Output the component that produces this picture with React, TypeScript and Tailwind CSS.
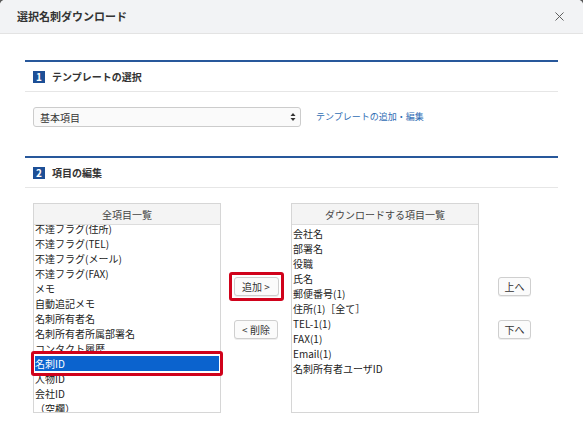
import { X } from "lucide-react";

const leftItems = [
  "不達フラグ(住所)",
  "不達フラグ(TEL)",
  "不達フラグ(メール)",
  "不達フラグ(FAX)",
  "メモ",
  "自動追記メモ",
  "名刺所有者名",
  "名刺所有者所属部署名",
  "コンタクト履歴",
  "名刺ID",
  "人物ID",
  "会社ID",
  "（空欄）",
];

const rightItems = [
  "会社名",
  "部署名",
  "役職",
  "氏名",
  "郵便番号(1)",
  "住所(1)［全て］",
  "TEL-1(1)",
  "FAX(1)",
  "Email(1)",
  "名刺所有者ユーザID",
];

function SectionHeading({ n, label }: { n: string; label: string }) {
  return (
    <div className="h-[30px] border-b border-[#e6e6e6] flex items-center gap-[7px] pl-[8px]">
      <span className="w-[12px] h-[12px] bg-[#1d4f96] text-white text-[10px] font-bold flex items-center justify-center leading-none">
        {n}
      </span>
      <span className="text-[10px] font-bold text-[#333]">{label}</span>
    </div>
  );
}

function Btn({ children, w }: { children: React.ReactNode; w: string }) {
  return (
    <div
      className={
        "h-[19px] border border-[#cfcfcf] rounded-[3px] bg-[#fbfbfb] text-[10px] text-[#333] flex items-center justify-center leading-none shadow-[0_1px_0_#eee] whitespace-nowrap " +
        w
      }
    >
      {children}
    </div>
  );
}

export default function App() {
  return (
    <div
      className="w-[583px] h-[443px] bg-[#5a5a5a] overflow-hidden"
      style={{ fontFamily: '"Noto Sans CJK JP", "Noto Sans", sans-serif' }}
    >
      <div className="h-full bg-white rounded-t-[5px] overflow-hidden">
        <div className="h-[34px] bg-[#f2f3f5] border-b border-[#e3e3e3] flex items-center justify-between pl-[17px] pr-[16px]">
          <span className="text-[11px] font-bold text-[#333]">選択名刺ダウンロード</span>
          <X size={15} strokeWidth={1.5} className="text-[#555]" />
        </div>

        <div className="px-[25px] pt-[26px]">
          <section className="border-t-2 border-[#28589b]">
            <SectionHeading n="1" label="テンプレートの選択" />
            <div className="mt-[15px] pl-[8px] flex items-center">
              <div className="w-[268px] h-[20px] border border-[#cccccc] rounded-[3px] bg-[#fafafa] flex items-center justify-between pl-[6px] pr-[4px]">
                <span className="text-[10px] text-[#333]">基本項目</span>
                <svg width="6" height="10" viewBox="0 0 6 10">
                  <path d="M3 1 L5.5 4 L0.5 4 Z" fill="#333" />
                  <path d="M3 9 L5.5 6 L0.5 6 Z" fill="#333" />
                </svg>
              </div>
              <span className="ml-[15px] text-[9px] text-[#2f6db4]">テンプレートの追加・編集</span>
            </div>
          </section>

          <section className="mt-[29px] border-t-2 border-[#28589b]">
            <SectionHeading n="2" label="項目の編集" />
            <div className="mt-[15px] pl-[8px] flex">
              {/* left list */}
              <div className="relative w-[188px] h-[210px] border border-[#d6d6d6] flex flex-col">
                <div className="h-[21px] shrink-0 bg-[#f4f4f4] border-b border-[#dddddd] flex items-center justify-center text-[10px] text-[#444]">
                  全項目一覧
                </div>
                <div className="flex-1 overflow-hidden">
                  <div className="mt-[-4px]">
                    {leftItems.map((t) => (
                      <div
                        key={t}
                        className={
                          "h-[15px] leading-[15px] pl-[1px] text-[10px] whitespace-nowrap " +
                          (t === "名刺ID" ? "bg-[#0b63ce] text-white" : "text-[#222]")
                        }
                      >
                        {t}
                      </div>
                    ))}
                  </div>
                </div>
                <div className="absolute left-[-3px] top-[147px] w-[192px] h-[25px] border-[3px] border-[#d0021b] rounded-[3px] shadow-[inset_1px_0_0_#fff,inset_-1px_0_0_#fff,inset_0_2px_0_#fff,inset_0_-2px_0_#fff]" />
              </div>

              {/* middle buttons */}
              <div className="w-[70px] flex flex-col items-center pt-[69px]">
                <div className="border-[3px] border-[#d0021b] rounded-[3px] p-[2px]">
                  <Btn w="w-[45px]">追加 &gt;</Btn>
                </div>
                <div className="mt-[19px]">
                  <Btn w="w-[44px]">&lt; 削除</Btn>
                </div>
              </div>

              {/* right list */}
              <div className="w-[188px] h-[210px] border border-[#d6d6d6] flex flex-col">
                <div className="h-[21px] shrink-0 bg-[#f4f4f4] border-b border-[#dddddd] flex items-center justify-center text-[10px] text-[#444]">
                  ダウンロードする項目一覧
                </div>
                <div className="flex-1 overflow-hidden pt-[1px]">
                  {rightItems.map((t) => (
                    <div key={t} className="h-[15px] leading-[15px] pl-[1px] text-[10px] text-[#222] whitespace-nowrap">
                      {t}
                    </div>
                  ))}
                </div>
              </div>

              {/* right buttons */}
              <div className="pl-[19px] pt-[74px] flex flex-col gap-[24px]">
                <Btn w="w-[33px]">上へ</Btn>
                <Btn w="w-[33px]">下へ</Btn>
              </div>
            </div>
          </section>
        </div>
      </div>
    </div>
  );
}
